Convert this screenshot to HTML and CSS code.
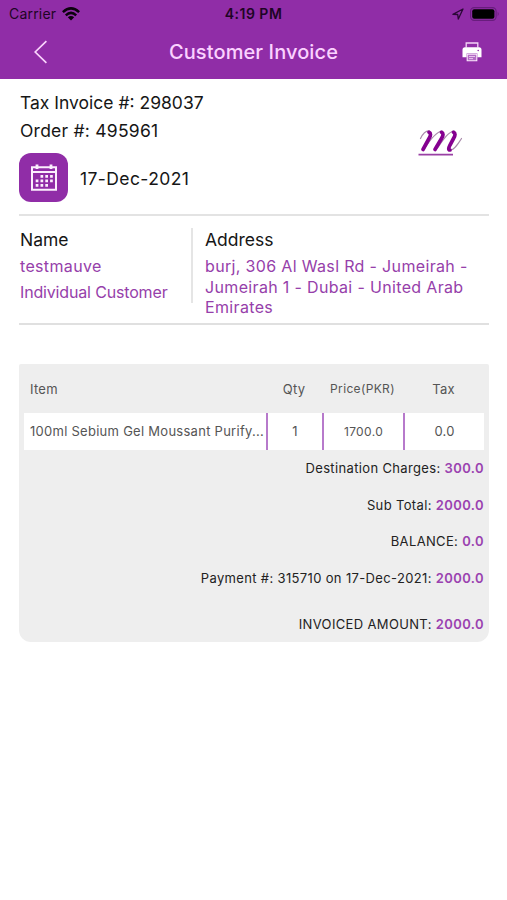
FILE: index.html
```html
<!DOCTYPE html>
<html lang="en">
<head>
<meta charset="utf-8">
<title>Customer Invoice</title>
<link rel="stylesheet" href="styles.css">
</head>
<body>
<header class="header">
  <div class="status">
    <div class="carrier"><span>Carrier</span>
      <svg class="wifi" width="18" height="14" viewBox="0 0 18 14"><g fill="none" stroke="#0b020d" stroke-width="2.5"><path d="M.9 5.2Q9-2.4 17.1 5.2"/><path d="M3.8 8.3Q9 3.5 14.2 8.3"/></g><path d="M5.8 10.3Q9 7.6 12.2 10.3L9 13.6Z" fill="#0b020d"/></svg>
    </div>
    <span class="time">4:19 PM</span>
    <div class="power">
      <svg width="12" height="12" viewBox="0 0 12 12"><path d="M.9 6.3 11 1 6.3 11.1 5.7 6.5Z" fill="none" stroke="#2a0836" stroke-width="1.3" stroke-linejoin="round"/></svg>
      <svg width="30" height="14" viewBox="0 0 30 14"><rect x=".6" y=".6" width="25.5" height="12.8" rx="3.6" fill="none" stroke="#681d7d" stroke-width="1.1"/><rect x="2.2" y="2.2" width="22.2" height="9.6" rx="2" fill="#000"/><path d="M27.7 4.8q2 2.2 0 4.4Z" fill="#681d7d"/></svg>
    </div>
  </div>
  <nav class="nav">
    <svg class="back" width="14" height="24" viewBox="0 0 14 24"><path d="M12.4 1.2 1.2 12l11.2 10.8" fill="none" stroke="#f9d4fc" stroke-width="1.7"/></svg>
    <h1>Customer Invoice</h1>
    <svg class="print" width="20" height="20" viewBox="0 0 20 20"><path d="M4.2 5.5V1h11.6v4.5" fill="none" stroke="#f3d5f7" stroke-width="1.3"/><path d="M3 5.2h14q2.5 0 2.5 2.6v7.4h-4.1v-3.6H4.6v3.6H.5V7.8Q.5 5.2 3 5.2Z" fill="#fff"/><circle cx="16.2" cy="8.5" r=".8" fill="#902da7"/><path d="M5.2 12.3h9.6v6.5H5.200Z" fill="#b46bc5" stroke="#fbe9fd" stroke-width="1.1"/><path d="M7 14.5h6M7 16.6h4" stroke="#edcff3" stroke-width=".9"/></svg>
  </nav>
</header>
<main class="page">
  <section class="summary">
    <div class="ids">
      <p class="tax-no">Tax Invoice #: 298037</p>
      <p class="order-no">Order #: 495961</p>
      <div class="date">
        <span class="tile"><svg width="26" height="27" viewBox="0 0 26 27"><path d="M1 3.2h24v22.6H1ZM1 7.9h24" fill="none" stroke="#fbeffd" stroke-width="2"/><path d="M6 .5v4.500M20 .5v4.500" stroke="#fbeffd" stroke-width="2.800"/><path d="M9.500 12.300h13M4.700 16.800h18M4.700 21.300h13" stroke="#fbeffd" stroke-width="2.700" stroke-dasharray="2.700 2.100"/></svg></span>
        <span class="day">17-Dec-2021</span>
      </div>
    </div>
    <svg class="logo" width="46" height="30" viewBox="0 0 46 30" fill="none" stroke-linecap="round"><g stroke="#a88aaa" stroke-width="1.200"><path d="M3.500 9.500C6 4.500 9.500 1.500 12.500 2"/><path d="M8 19C13 11 19 3 25 2"/><path d="M20.500 19C26 11 31 3 37 2"/><path d="M33 21C37 21.500 41 15 44.500 9.500"/></g><g stroke="#850090" stroke-width="3.700"><path d="M12 3.300Q15 4.500 12 9.500L6 20.500"/><path d="M24.500 3.300Q27.500 4.500 24.500 9.500L18 20.500"/><path d="M36.500 3.300Q39.500 4.500 36.500 9.500L33 16Q30.500 21 33 21"/></g><path d="M1.500 25.700h34.500" stroke="#9940a4" stroke-width="1.700" stroke-linecap="butt"/></svg>
  </section>
  <section class="parties">
    <div class="customer"><h2>Name</h2><p>testmauve</p><p class="kind">Individual Customer</p></div>
    <div class="address"><h2>Address</h2><p>burj, 306 Al Wasl Rd - Jumeirah -<br>Jumeirah 1 - Dubai - United Arab<br>Emirates</p></div>
  </section>
  <section class="invoice">
    <div class="row head"><span class="item">Item</span><span>Qty</span><span class="price">Price(PKR)</span><span>Tax</span></div>
    <div class="row line"><span class="item">100ml Sebium Gel Moussant Purify...</span><span>1</span><span class="price">1700.0</span><span>0.0</span></div>
    <div class="totals">
      <p>Destination Charges: <b>300.0</b></p>
      <p>Sub Total: <b>2000.0</b></p>
      <p>BALANCE: <b>0.0</b></p>
      <p>Payment #: 315710 on 17-Dec-2021: <b>2000.0</b></p>
      <p class="final">INVOICED AMOUNT: <b>2000.0</b></p>
    </div>
  </section>
</main>
</body>
</html>
```
FILE: styles.css
```css
* { box-sizing: border-box; }
body { margin: 0; background: #fff; color: #161616; font-family: Inter, "Liberation Sans", sans-serif; }
h1, h2, p { margin: 0; font-weight: 400; }
svg { display: block; }
.header { height: 79px; background: #902da7; }
.status { height: 27px; display: grid; grid-template-columns: 1fr auto 1fr; align-items: center; padding: 0 7px 0 9px; font-size: 14px; color: #1e0525; }
.carrier { display: flex; align-items: center; gap: 6px; letter-spacing: .2px; }
.time { font-weight: 600; letter-spacing: .5px; margin-right: 2px; }
.power { display: flex; justify-content: flex-end; align-items: center; gap: 6px; }
.nav { height: 50px; display: grid; grid-template-columns: 1fr auto 1fr; align-items: center; padding: 0 25px; }
.back { margin-left: 9px; }
h1 { font-size: 20px; font-weight: 500; color: #fbd2ff; letter-spacing: .1px; }
.print { justify-self: end; }
.page { padding: 0 18px 0 19px; }
.summary { height: 137px; display: flex; justify-content: space-between; border-bottom: 2px solid #e3e3e3; padding: 10px 26px 0 0; }
.ids { font-size: 17.5px; padding-left: 1px; }
.ids p { height: 28px; line-height: 28px; }
.order-no { letter-spacing: .24px; }
.date { display: flex; align-items: center; gap: 12px; margin: 8px 0 0 -1px; }
.day { letter-spacing: .4px; padding-top: 1px; }
.tile { width: 49px; height: 49px; border-radius: 12px; background: #902da7; display: grid; place-items: center; }
.logo { margin-top: 40px; }
.parties { display: flex; height: 109px; border-bottom: 2px solid #e0e0e0; padding-top: 12px; }
.customer { width: 174px; height: 75px; border-right: 2px solid #e5e5e5; padding-left: 1px; }
.address { padding-left: 12px; }
h2 { font-size: 17.5px; line-height: 24px; }
.parties p { font-size: 16px; line-height: 20.5px; color: #9640aa; padding-top: 4px; white-space: nowrap; letter-spacing: .34px; }
.parties .kind { padding-top: 5px; letter-spacing: -.16px; }
.invoice { margin-top: 39px; background: #eee; border-radius: 2px 2px 12px 12px; height: 278px; padding: 0 5px; }
.row { display: grid; grid-template-columns: 242px 56px 81px 1fr; align-items: center; text-align: center; font-size: 13px; color: #555; letter-spacing: .2px; }
.row .price { font-size: 12px; letter-spacing: .35px; }
.row .item { text-align: left; padding-left: 6px; white-space: nowrap; letter-spacing: .27px; }
.head { height: 49px; }
.line { height: 37px; background: #fff; }
.line span { height: 37px; line-height: 37px; }
.line span + span { border-left: 2px solid #b77acb; }
.totals { text-align: right; font-size: 13px; color: #222; letter-spacing: .35px; }
.totals p { height: 36.6px; line-height: 37.5px; }
.totals .final { margin-top: 10px; }
.totals b { font-weight: 600; color: #9a42b0; letter-spacing: .4px; }
```
